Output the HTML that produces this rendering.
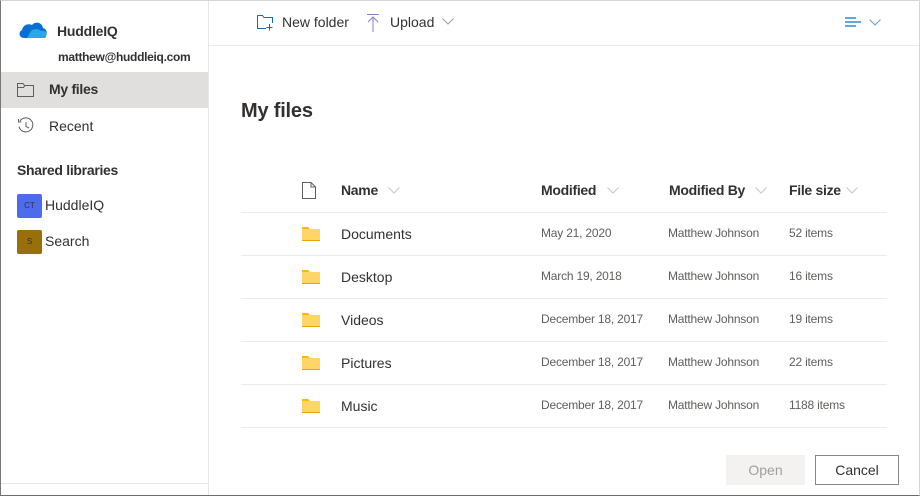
<!DOCTYPE html>
<html><head><meta charset="utf-8"><style>
*{box-sizing:border-box;margin:0;padding:0}
body{width:920px;height:496px;overflow:hidden;background:#fff;font-family:"Liberation Sans",sans-serif;color:#323130;position:relative}
.frame{position:absolute;left:0;top:0;width:920px;height:496px;border:1px solid #d6d6d6;border-left:1px solid #777;border-bottom:1px solid #6e6e6e}
.side{position:absolute;left:1px;top:1px;width:208px;height:494px;border-right:1px solid #e6e6e6}
.abs{position:absolute;white-space:nowrap}
.sel{position:absolute;left:0;top:71px;width:207px;height:36px;background:#e1dfdd}
.hline{position:absolute;height:1px;background:#edebe9}
.hdr{font-size:14px;font-weight:bold;color:#323130;letter-spacing:-0.3px}
.nm{font-size:14px;color:#323130}
.sm{font-size:12px;color:#605e5c;letter-spacing:-0.2px}
.chev{position:absolute}
.btn{position:absolute;height:30px;font-size:14px;text-align:center;line-height:28px}
</style></head><body>
<div class="frame"></div>
<div class="side">
  <svg class="abs" style="left:17px;top:19px" width="30" height="20" viewBox="0 0 30 20"><path d="M6 18 C1 18 0 12 4 10 C5 5 10 3 14 5 C17 1 24 2 25 8 C29 9 30 14 27 17 L26 18Z" fill="#0a6fd1"/><path d="M9 18 L13 11 C16 8 21 9 23 11 C27 10 30 13 28 17 L27 18Z" fill="#28a8ea"/></svg>
  <div class="abs" style="left:56px;top:22px;font-size:14px;font-weight:bold;color:#323130;letter-spacing:-0.2px">HuddleIQ</div>
  <div class="abs" style="left:57px;top:49px;font-size:12px;font-weight:bold;color:#323130;letter-spacing:-0.3px">matthew@huddleiq.com</div>
  <div class="sel"></div>
  <svg class="abs" style="left:16px;top:82px" width="17" height="14" viewBox="0 0 17 14"><path d="M.5 .5H6L7.5 2.5H16.5V13.5H.5Z M.5 4.5H6.5L8 2.5" fill="none" stroke="#605e5c"/></svg>
  <div class="abs" style="left:48px;top:80px;font-size:14px;font-weight:bold;letter-spacing:-0.3px">My files</div>
  <svg class="abs" style="left:16px;top:116px" width="18" height="18" viewBox="0 0 18 18"><path d="M3 4A7 7 0 1 1 2 9.5 M1.5 2V5H4.5 M9 5V9.5L12 11" fill="none" stroke="#605e5c"/></svg>
  <div class="abs" style="left:48px;top:117px;font-size:14px;color:#323130">Recent</div>
  <div class="abs" style="left:16px;top:161px;font-size:14px;font-weight:bold;color:#323130;letter-spacing:-0.3px">Shared libraries</div>
  <div class="abs" style="left:16px;top:193px;width:25px;height:24px;background:#4f6bed;border-radius:2px;color:#333;font-size:8px;text-align:center;line-height:24px">CT</div>
  <div class="abs" style="left:44px;top:196px;font-size:14px">HuddleIQ</div>
  <div class="abs" style="left:16px;top:229px;width:25px;height:24px;background:#986f0b;border-radius:2px;color:#333;font-size:8px;text-align:center;line-height:24px">S</div>
  <div class="abs" style="left:44px;top:232px;font-size:14px">Search</div>
  <div class="hline" style="left:0;top:482px;width:207px;background:#e6e6e6"></div>
</div>
<div class="hline" style="left:209px;top:45px;width:710px"></div>
<svg class="abs" style="left:257px;top:15px" width="18" height="16" viewBox="0 0 18 16"><path d="M.5 .5H5.5L7 2.5H15.5V8 M.5 .5V13.5H9 M12.5 9V15.5 M9.5 12.5H15.5" fill="none" stroke="#0f6cbd"/></svg>
<div class="abs" style="left:282px;top:14px;font-size:14px">New folder</div>
<svg class="abs" style="left:366px;top:14px" width="14" height="18" viewBox="0 0 14 18"><path d="M1 .5H13 M7 3V18 M2 8L7 3L12 8" fill="none" stroke="#8a7fc4"/></svg>
<div class="abs" style="left:390px;top:14px;font-size:14px">Upload</div>
<svg class="chev" style="left:442px;top:18px" width="12" height="7" viewBox="0 0 12 7"><path d="M.5 .5L6 6L11.5 .5" fill="none" stroke="#a19f9d"/></svg>
<svg class="abs" style="left:845px;top:17px" width="16" height="10" viewBox="0 0 16 10"><path d="M0 1H11M0 5H16M0 9H11" stroke="#0078d4" stroke-width="1.2"/></svg>
<svg class="chev" style="left:869px;top:19px" width="12" height="7" viewBox="0 0 12 7"><path d="M.5 .5L6 6L11.5 .5" fill="none" stroke="#6b9bd1"/></svg>
<div class="abs" style="left:241px;top:100px;font-size:20px;font-weight:bold;color:#323130;letter-spacing:-0.2px">My files</div>
<svg class="abs" style="left:302px;top:182px" width="14" height="17" viewBox="0 0 14 17"><path d="M.5 .5H9L13.5 5V16.5H.5Z M9 .5V5H13.5" fill="none" stroke="#605e5c"/></svg>
<div class="abs hdr" style="left:341px;top:182px">Name</div>
<svg class="chev" style="left:388px;top:187px" width="12" height="7" viewBox="0 0 12 7"><path d="M.5 .5L6 6L11.5 .5" fill="none" stroke="#c8c6c4"/></svg>
<div class="abs hdr" style="left:541px;top:182px">Modified</div>
<svg class="chev" style="left:607px;top:187px" width="12" height="7" viewBox="0 0 12 7"><path d="M.5 .5L6 6L11.5 .5" fill="none" stroke="#c8c6c4"/></svg>
<div class="abs hdr" style="left:669px;top:182px">Modified By</div>
<svg class="chev" style="left:755px;top:187px" width="12" height="7" viewBox="0 0 12 7"><path d="M.5 .5L6 6L11.5 .5" fill="none" stroke="#c8c6c4"/></svg>
<div class="abs hdr" style="left:789px;top:182px">File size</div>
<svg class="chev" style="left:846px;top:187px" width="12" height="7" viewBox="0 0 12 7"><path d="M.5 .5L6 6L11.5 .5" fill="none" stroke="#c8c6c4"/></svg>
<div class="hline" style="left:241px;top:212px;width:646px"></div>

<svg class="abs" style="left:302px;top:227px" width="18" height="14" viewBox="0 0 18 14"><path d="M0 0H6L8 2H18V14H0Z" fill="#ffd567"/><path d="M0 0H6L8 2H0Z" fill="#ffb900"/><rect x="0" y="13" width="18" height="1" fill="#e9a300"/></svg>
<div class="abs nm" style="left:341px;top:226px">Documents</div>
<div class="abs sm" style="left:541px;top:226px">May 21, 2020</div>
<div class="abs sm" style="left:668px;top:226px">Matthew Johnson</div>
<div class="abs sm" style="left:789px;top:226px">52 items</div>
<div class="hline" style="left:241px;top:255px;width:646px"></div>
<svg class="abs" style="left:302px;top:270px" width="18" height="14" viewBox="0 0 18 14"><path d="M0 0H6L8 2H18V14H0Z" fill="#ffd567"/><path d="M0 0H6L8 2H0Z" fill="#ffb900"/><rect x="0" y="13" width="18" height="1" fill="#e9a300"/></svg>
<div class="abs nm" style="left:341px;top:269px">Desktop</div>
<div class="abs sm" style="left:541px;top:269px">March 19, 2018</div>
<div class="abs sm" style="left:668px;top:269px">Matthew Johnson</div>
<div class="abs sm" style="left:789px;top:269px">16 items</div>
<div class="hline" style="left:241px;top:298px;width:646px"></div>
<svg class="abs" style="left:302px;top:313px" width="18" height="14" viewBox="0 0 18 14"><path d="M0 0H6L8 2H18V14H0Z" fill="#ffd567"/><path d="M0 0H6L8 2H0Z" fill="#ffb900"/><rect x="0" y="13" width="18" height="1" fill="#e9a300"/></svg>
<div class="abs nm" style="left:341px;top:312px">Videos</div>
<div class="abs sm" style="left:541px;top:312px">December 18, 2017</div>
<div class="abs sm" style="left:668px;top:312px">Matthew Johnson</div>
<div class="abs sm" style="left:789px;top:312px">19 items</div>
<div class="hline" style="left:241px;top:341px;width:646px"></div>
<svg class="abs" style="left:302px;top:356px" width="18" height="14" viewBox="0 0 18 14"><path d="M0 0H6L8 2H18V14H0Z" fill="#ffd567"/><path d="M0 0H6L8 2H0Z" fill="#ffb900"/><rect x="0" y="13" width="18" height="1" fill="#e9a300"/></svg>
<div class="abs nm" style="left:341px;top:355px">Pictures</div>
<div class="abs sm" style="left:541px;top:355px">December 18, 2017</div>
<div class="abs sm" style="left:668px;top:355px">Matthew Johnson</div>
<div class="abs sm" style="left:789px;top:355px">22 items</div>
<div class="hline" style="left:241px;top:384px;width:646px"></div>
<svg class="abs" style="left:302px;top:399px" width="18" height="14" viewBox="0 0 18 14"><path d="M0 0H6L8 2H18V14H0Z" fill="#ffd567"/><path d="M0 0H6L8 2H0Z" fill="#ffb900"/><rect x="0" y="13" width="18" height="1" fill="#e9a300"/></svg>
<div class="abs nm" style="left:341px;top:398px">Music</div>
<div class="abs sm" style="left:541px;top:398px">December 18, 2017</div>
<div class="abs sm" style="left:668px;top:398px">Matthew Johnson</div>
<div class="abs sm" style="left:789px;top:398px">1188 items</div>
<div class="hline" style="left:241px;top:427px;width:646px"></div>

<div class="btn" style="left:726px;top:455px;width:79px;background:#f3f2f1;color:#a19f9d;line-height:30px">Open</div>
<div class="btn" style="left:815px;top:455px;width:84px;border:1px solid #8a8886;color:#323130">Cancel</div>
</body></html>
